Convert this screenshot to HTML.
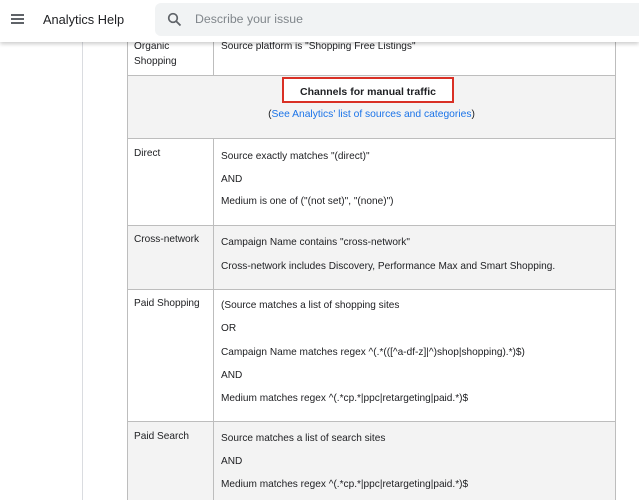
<!DOCTYPE html><html><head><style>
html,body{margin:0;width:639px;height:500px;overflow:hidden}
body{background:#fff;font-family:"Liberation Sans",Arial,sans-serif;color:#202124;position:relative}
.a{position:absolute;font-size:10.1px;line-height:14px;white-space:nowrap;margin-top:1px}
.r{position:absolute;left:127px;width:489px;border-left:1px solid #bdbdbd;border-right:1px solid #bdbdbd;border-top:1px solid #bdbdbd;box-sizing:border-box}
.g{background:#f3f3f3}
.d{position:absolute;left:213px;width:1px;background:#bdbdbd}
</style></head><body>
<div style="position:absolute;left:82px;top:0;width:1px;height:500px;background:#dadce0"></div>
<div class="r" style="top:20px;height:56px"></div>
<div class="r g" style="top:75px;height:64px"></div>
<div class="r" style="top:138px;height:88px"></div>
<div class="r g" style="top:225px;height:65px"></div>
<div class="r" style="top:289px;height:133px"></div>
<div class="r g" style="top:421px;height:79px"></div>
<div class="d" style="top:30px;height:45px"></div>
<div class="d" style="top:138px;height:362px"></div>

<div class="a" style="left:134px;top:39px">Organic</div>
<div class="a" style="left:134px;top:54px">Shopping</div>
<div class="a" style="left:221px;top:39px">Source platform is "Shopping Free Listings"</div>
<div style="position:absolute;left:282px;top:77px;width:172px;height:26px;border:2px solid #d93025;box-sizing:border-box;background:#fff"></div>
<div class="a" style="left:282px;width:172px;text-align:center;top:84px;font-weight:bold;font-size:10.5px">Channels for manual traffic</div>
<div class="a" style="left:127px;width:489px;text-align:center;top:107px;color:#1a73e8;font-size:10.3px"><span style="color:#202124">(</span>See Analytics' list of sources and categories<span style="color:#202124">)</span></div>

<div class="a" style="left:134px;top:146px">Direct</div>
<div class="a" style="left:221px;top:149px">Source exactly matches "(direct)"</div>
<div class="a" style="left:221px;top:172px">AND</div>
<div class="a" style="left:221px;top:194px">Medium is one of ("(not set)", "(none)")</div>

<div class="a" style="left:134px;top:232px">Cross-network</div>
<div class="a" style="left:221px;top:235px">Campaign Name contains "cross-network"</div>
<div class="a" style="left:221px;top:259px">Cross-network includes Discovery, Performance Max and Smart Shopping.</div>

<div class="a" style="left:134px;top:296px">Paid Shopping</div>
<div class="a" style="left:221px;top:298px">(Source matches a list of shopping sites</div>
<div class="a" style="left:221px;top:321px">OR</div>
<div class="a" style="left:221px;top:345px">Campaign Name matches regex ^(.*(([^a-df-z]|^)shop|shopping).*)$)</div>
<div class="a" style="left:221px;top:368px">AND</div>
<div class="a" style="left:221px;top:391px">Medium matches regex ^(.*cp.*|ppc|retargeting|paid.*)$</div>

<div class="a" style="left:134px;top:429px">Paid Search</div>
<div class="a" style="left:221px;top:431px">Source matches a list of search sites</div>
<div class="a" style="left:221px;top:454px">AND</div>
<div class="a" style="left:221px;top:477px">Medium matches regex ^(.*cp.*|ppc|retargeting|paid.*)$</div>

<div style="position:absolute;left:0;top:0;width:639px;height:42px;background:#fff;box-shadow:0 2px 4px rgba(0,0,0,.2)">
<div style="position:absolute;left:11px;top:14px;width:13px;height:2px;background:#5f6368;box-shadow:0 4px 0 #5f6368,0 8px 0 #5f6368"></div>
<div style="position:absolute;left:43px;top:12px;font-size:12.8px;color:#202124">Analytics Help</div>
<div style="position:absolute;left:155px;top:3px;width:490px;height:33px;background:#f1f3f4;border-radius:6px">
<svg style="position:absolute;left:12px;top:9px" width="15" height="15" viewBox="0 0 15 15"><circle cx="6" cy="6" r="4.3" fill="none" stroke="#5f6368" stroke-width="1.7"/><path d="M9.2 9.2L13.5 13.5" stroke="#5f6368" stroke-width="1.8"/></svg>
<div style="position:absolute;left:40px;top:9px;font-size:12.3px;color:#80868b">Describe your issue</div>
</div></div>
</body></html>
